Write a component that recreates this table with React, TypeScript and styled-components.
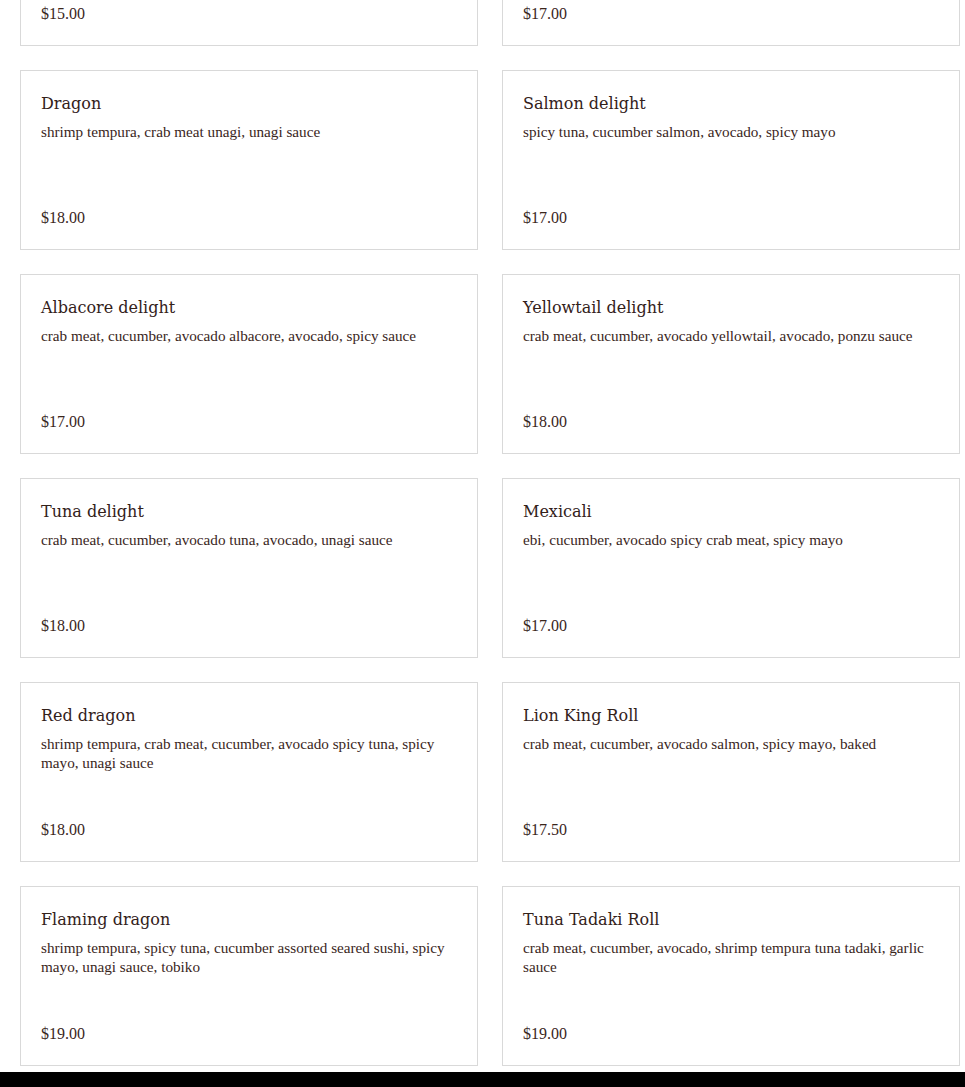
import styled, { createGlobalStyle } from 'styled-components';

const GlobalStyle = createGlobalStyle`
    body {
        margin: 0;
        background: #ffffff;
        font-family: "Liberation Serif", serif;
        color: #3a261c;
    }
`;

const Page = styled.div`
    display: flex;
    flex-direction: column;
    min-height: 100vh;
    overflow: hidden;
`;

const MenuGrid = styled.div`
    display: grid;
    grid-template-columns: 458px 458px;
    gap: 24px;
    padding: 0 0 6px 20px;
    margin-top: -134px;
`;

const Card = styled.div`
    display: flex;
    flex-direction: column;
    height: 180px;
    box-sizing: border-box;
    border: 1px solid #d9d9d9;
    padding: 23px 20px 21px 20px;
`;

const ItemName = styled.h3`
    margin: 0;
    font-family: "DejaVu Serif", serif;
    font-weight: normal;
    font-size: 16px;
    line-height: 20px;
    color: #33211a;
`;

const ItemDesc = styled.p`
    margin: 8px 0 0 0;
    font-size: 15.2px;
    line-height: 19px;
    color: #3a261c;
`;

const Price = styled.div`
    margin-top: auto;
    font-size: 16px;
    line-height: 20px;
    color: #3a261c;
`;

const Footer = styled.footer`
    flex: 1;
    min-height: 16px;
    background: #000000;
`;

const items = [
    { name: 'Rainbow', desc: 'crab meat, cucumber, avocado assorted fish', price: '$15.00' },
    { name: 'Caterpillar', desc: 'unagi, cucumber, avocado, unagi sauce', price: '$17.00' },
    { name: 'Dragon', desc: 'shrimp tempura, crab meat unagi, unagi sauce', price: '$18.00' },
    { name: 'Salmon delight', desc: 'spicy tuna, cucumber salmon, avocado, spicy mayo', price: '$17.00' },
    { name: 'Albacore delight', desc: 'crab meat, cucumber, avocado albacore, avocado, spicy sauce', price: '$17.00' },
    { name: 'Yellowtail delight', desc: 'crab meat, cucumber, avocado yellowtail, avocado, ponzu sauce', price: '$18.00' },
    { name: 'Tuna delight', desc: 'crab meat, cucumber, avocado tuna, avocado, unagi sauce', price: '$18.00' },
    { name: 'Mexicali', desc: 'ebi, cucumber, avocado spicy crab meat, spicy mayo', price: '$17.00' },
    { name: 'Red dragon', desc: 'shrimp tempura, crab meat, cucumber, avocado spicy tuna, spicy mayo, unagi sauce', price: '$18.00' },
    { name: 'Lion King Roll', desc: 'crab meat, cucumber, avocado salmon, spicy mayo, baked', price: '$17.50' },
    { name: 'Flaming dragon', desc: 'shrimp tempura, spicy tuna, cucumber assorted seared sushi, spicy mayo, unagi sauce, tobiko', price: '$19.00' },
    { name: 'Tuna Tadaki Roll', desc: 'crab meat, cucumber, avocado, shrimp tempura tuna tadaki, garlic sauce', price: '$19.00' },
];

export default function App() {
    return (
        <Page>
            <GlobalStyle />
            <MenuGrid>
                {items.map((item) => (
                    <Card key={item.name}>
                        <ItemName>{item.name}</ItemName>
                        <ItemDesc>{item.desc}</ItemDesc>
                        <Price>{item.price}</Price>
                    </Card>
                ))}
            </MenuGrid>
            <Footer />
        </Page>
    );
}
